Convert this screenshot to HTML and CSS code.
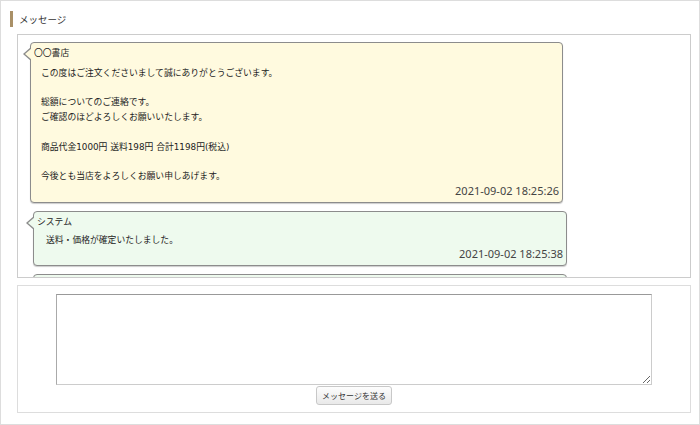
FILE: index.html
```html
<!DOCTYPE html>
<html lang="ja">
<head>
  <meta charset="UTF-8">
  <title>メッセージ</title>
  <meta name="viewport" content="width=device-width, initial-scale=1.0">
  <link rel="stylesheet" href="styles.css">
</head>
<body>
  <div class="page">
    <h2 class="title">メッセージ</h2>

    <div class="messages">
      <div class="msg shop">
        <div class="msg-name">〇〇書店</div>
        <div class="msg-body">この度はご注文くださいまして誠にありがとうございます。<br><br>総額についてのご連絡です。<br>ご確認のほどよろしくお願いいたします。<br><br>商品代金1000円 送料198円 合計1198円(税込)<br><br>今後とも当店をよろしくお願い申しあげます。</div>
        <div class="msg-time">2021-09-02 18:25:26</div>
      </div>

      <div class="msg system">
        <div class="msg-name">システム</div>
        <div class="msg-body">送料・価格が確定いたしました。</div>
        <div class="msg-time">2021-09-02 18:25:38</div>
      </div>

      <!-- next message, scrolled out of view -->
      <div class="msg system more"></div>
    </div>

    <div class="compose">
      <textarea id="message"></textarea>
      <button type="button">メッセージを送る</button>
    </div>
  </div>
</body>
</html>
```

FILE: styles.css
```css
body {
  margin: 0;
  background: #fff;
  font-family: 'Noto Sans CJK JP', sans-serif;
  color: #222;
}
.page {
  width: 700px;
  height: 425px;
  box-sizing: border-box;
  border: 1px solid #ddd;
  padding: 10px 8px 0 9px;
}
.title {
  margin: 0;
  height: 16px;
  line-height: 16px;
  border-left: 3px solid #a99067;
  padding-left: 6px;
  font-size: 9.5px;
  font-weight: normal;
  color: #333;
}
.messages {
  margin: 7px 0 0 7px;
  height: 244px;
  box-sizing: border-box;
  border: 1px solid #ccc;
  padding: 7px 0 0 12px;
  overflow: hidden;
}
.msg {
  position: relative;
  width: 533px;
  border: 1px solid #8c8c8c;
  border-radius: 4px;
  box-shadow: 0 1px 1px rgba(0,0,0,0.2);
  padding: 3px 3px 5px 3px;
  box-sizing: border-box;
  margin-bottom: 8px;
  font-size: 8.8px;
}
.msg::before, .msg::after {
  content: "";
  position: absolute;
  width: 0;
  height: 0;
  border-style: solid;
  border-color: transparent;
}
.msg::before {
  left: -8px;
  top: 4px;
  border-width: 7px 8px 7px 0;
  border-right-color: #8c8c8c;
}
.msg::after {
  left: -6px;
  top: 5px;
  border-width: 6px 7px 6px 0;
}
.shop {
  background: #fffadf;
}
.shop::after {
  border-right-color: #fffadf;
}
.system {
  margin-left: 3px;
  width: 534px;
  background: #eefaee;
}
.system::after {
  border-right-color: #eefaee;
}
.more {
  height: 40px;
}
.msg-name {
  line-height: 14px;
}
.msg-body {
  margin-top: 6px;
  padding-left: 7px;
  line-height: 14.7px;
  font-family: 'DejaVu Sans', 'Noto Sans CJK JP', sans-serif;
}
.system .msg-body {
  margin-top: 4px;
  padding-left: 9px;
}
.msg-time {
  text-align: right;
  font-family: 'Noto Sans', sans-serif;
  font-size: 11px;
  line-height: 13px;
  color: #444;
}
.compose {
  margin: 7px 0 0 7px;
  height: 128px;
  box-sizing: border-box;
  border: 1px solid #ddd;
  padding: 8px 0 0;
}
.compose textarea {
  display: block;
  width: 596px;
  height: 91px;
  margin: 0 auto;
  box-sizing: border-box;
  border: 1px solid #aaa;
  border-top-color: #999;
  border-bottom-color: #ccc;
  border-right-color: #ccc;
  padding: 2px;
  font-family: inherit;
}
.compose button {
  display: block;
  margin: 1px auto 0;
  height: 19px;
  padding: 0 5px;
  border: 1px solid #c8c8c8;
  border-radius: 3px;
  background: linear-gradient(#fdfdfd, #e9e9e9);
  font-family: inherit;
  font-size: 8px;
  color: #333;
  cursor: pointer;
}
```
